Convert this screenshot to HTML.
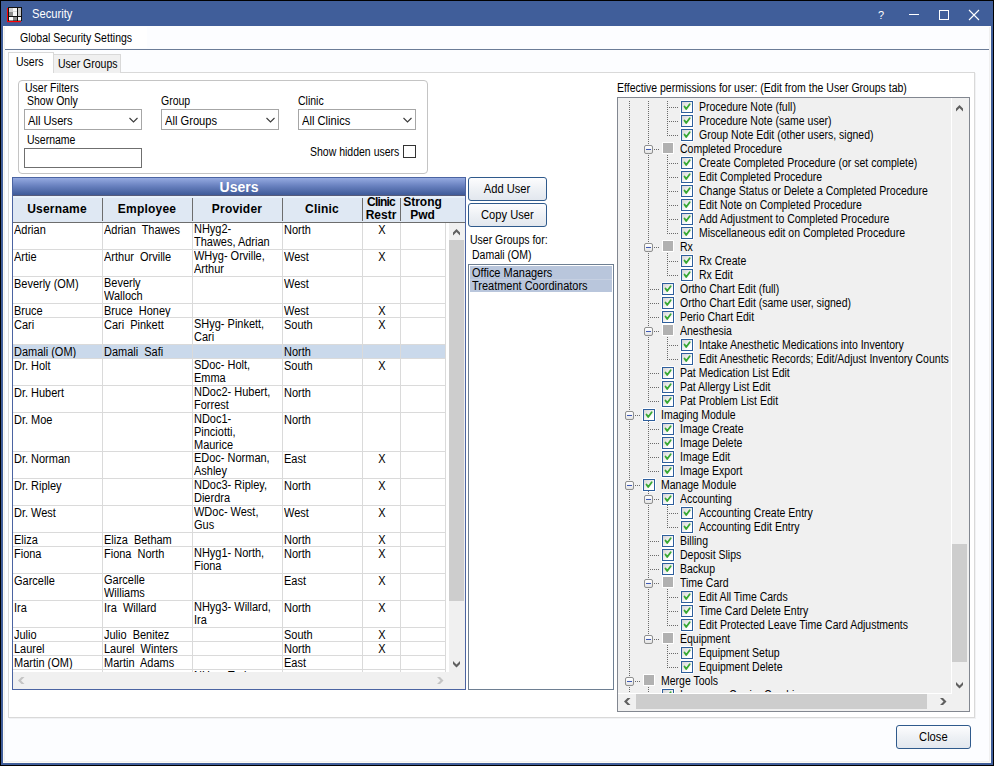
<!DOCTYPE html><html><head><meta charset="utf-8"><title>Security</title><style>
*{margin:0;padding:0;box-sizing:border-box}
html,body{width:994px;height:766px;overflow:hidden;background:#000}
body{position:relative;font-family:"Liberation Sans", sans-serif;font-size:12px;color:#000}
.a{position:absolute}
.t{position:absolute;white-space:nowrap;line-height:13px;transform-origin:0 0}
.ts{transform:scaleX(0.875)}
.tg{transform:scaleX(0.915)}
.tm{transform:scaleX(0.93)}
.cm span{transform:scaleX(0.93)}
.c{position:absolute;white-space:nowrap;line-height:13px;text-align:center}
.c span{display:inline-block}
.cs span{transform:scaleX(0.875)}
.cg span{transform:scaleX(0.915)}
.b{font-weight:bold}
.nos span{transform:none}
</style></head><body>
<div class="a" style="left:1px;top:1px;width:992px;height:764px;background:#405e9a"></div>
<div class="a" style="left:3px;top:26px;width:988px;height:737px;background:#fbfaf4"></div>
<div class="a" style="left:4px;top:27px;width:986px;height:735px;background:#f0f0f0"></div>
<div class="a" style="left:5px;top:27px;width:984px;height:734px;background:#fcfdff"></div>
<div class="a" style="left:3px;top:26px;width:987px;height:1px;background:#fdfdfd"></div>
<svg class="a" style="left:7px;top:7px" width="15" height="16" viewBox="0 0 15 16">
<rect x="0" y="1" width="1" height="14" fill="#f00"/><rect x="0" y="14" width="14" height="1.2" fill="#f00"/>
<rect x="1" y="0" width="14" height="14" fill="#111"/>
<rect x="2" y="1" width="4" height="4" fill="#cfcfcf"/><rect x="2" y="5" width="4" height="4" fill="#8c8c8c"/>
<rect x="6" y="1" width="4" height="8" fill="#f8f8f8"/><rect x="6" y="4" width="4" height="1" fill="#dcdcdc"/>
<rect x="11" y="1" width="3" height="8" fill="#c4c4c4"/>
<rect x="2" y="10" width="4" height="3.5" fill="#fdfdfd"/><rect x="6" y="10" width="4" height="3.5" fill="#8a8a8a"/><rect x="11" y="10" width="3" height="3.5" fill="#fdfdfd"/>
</svg>
<div class="t tm" style="left:32px;top:8px;color:#fff">Security</div>
<div class="t ts" style="left:878px;top:9px;color:#fff;transform:none;font-size:11px">?</div>
<div class="a" style="left:909px;top:14px;width:10px;height:1px;background:#fff"></div>
<div class="a" style="left:939px;top:10px;width:10px;height:10px;border:1px solid #fff"></div>
<svg class="a" style="left:968px;top:9px" width="12" height="12" viewBox="0 0 12 12"><path d="M1 1L11 11M11 1L1 11" stroke="#fff" stroke-width="1.1"/></svg>
<div class="a" style="left:5px;top:27px;width:142px;height:21px;background:#fff"></div>
<div class="t ts" style="left:20px;top:32px;">Global Security Settings</div>
<div class="a" style="left:5px;top:49px;width:984px;height:1px;background:#6b7c97"></div>
<div class="a" style="left:9px;top:73px;width:967px;height:646px;background:#f1f2f4"></div>
<div class="a" style="left:8px;top:72px;width:967px;height:646px;background:#fff;border:1px solid #d9d9d9"></div>
<div class="a" style="left:53px;top:54px;width:68px;height:19px;background:#f0f0f0;border:1px solid #d9d9d9;border-bottom:none"></div>
<div class="t ts" style="left:58px;top:58px;">User Groups</div>
<div class="a" style="left:8px;top:52px;width:46px;height:21px;background:#fff;border:1px solid #d9d9d9;border-bottom:none"></div>
<div class="t ts" style="left:16px;top:56px;">Users</div>
<div class="a" style="left:18px;top:80px;width:410px;height:94px;border:1px solid #c4c4c4;border-radius:4px"></div>
<div class="t ts" style="left:25px;top:82px;">User Filters</div>
<div class="t ts" style="left:27px;top:95px;">Show Only</div>
<div class="t ts" style="left:161px;top:95px;">Group</div>
<div class="t ts" style="left:298px;top:95px;">Clinic</div>
<div class="t ts" style="left:27px;top:134px;">Username</div>
<div class="a" style="left:24px;top:109px;width:118px;height:21px;border:1px solid #a6a6a6;background:#fff"></div>
<div class="t tm" style="left:28px;top:115px;">All Users</div>
<svg class="a" style="left:129px;top:117px" width="9" height="7" viewBox="0 0 9 7"><path d="M0.5 1L4.5 5L8.5 1" fill="none" stroke="#3a3a3a" stroke-width="1.1"/></svg>
<div class="a" style="left:161px;top:109px;width:118px;height:21px;border:1px solid #a6a6a6;background:#fff"></div>
<div class="t tm" style="left:165px;top:115px;">All Groups</div>
<svg class="a" style="left:266px;top:117px" width="9" height="7" viewBox="0 0 9 7"><path d="M0.5 1L4.5 5L8.5 1" fill="none" stroke="#3a3a3a" stroke-width="1.1"/></svg>
<div class="a" style="left:298px;top:109px;width:118px;height:21px;border:1px solid #a6a6a6;background:#fff"></div>
<div class="t tm" style="left:302px;top:115px;">All Clinics</div>
<svg class="a" style="left:403px;top:117px" width="9" height="7" viewBox="0 0 9 7"><path d="M0.5 1L4.5 5L8.5 1" fill="none" stroke="#3a3a3a" stroke-width="1.1"/></svg>
<div class="a" style="left:24px;top:148px;width:118px;height:20px;border:1px solid #6f6f6f;background:#fff"></div>
<div class="t ts" style="left:310px;top:146px;">Show hidden users</div>
<div class="a" style="left:403px;top:145px;width:13px;height:13px;border:1px solid #333;background:#fff"></div>
<div class="a" style="left:12px;top:177px;width:454px;height:513px;border:1px solid #4b64a2;background:#fff;overflow:hidden">
<div class="a" style="left:0px;top:0px;width:452px;height:17px;background:linear-gradient(#95aae0,#6a82c0 45%,#3e5a98)"></div>
<div class="c cs b nos" style="left:0px;top:1px;width:452px;color:#fff;font-size:14px;line-height:16px"><span>Users</span></div>
<div class="a" style="left:0px;top:18px;width:452px;height:27px;background:#dfe8f3;border-bottom:1px solid #6d6d6d"></div>
<div class="a" style="left:0px;top:17px;width:452px;height:1px;background:#565b7a"></div>
<div class="a" style="left:0px;top:18px;width:452px;height:2px;background:#e8f1fa"></div>
<div class="c cg b nos" style="left:-1px;top:25px;width:90px;letter-spacing:0.2px"><span>Username</span></div>
<div class="c cg b nos" style="left:89px;top:25px;width:90px;letter-spacing:0.2px"><span>Employee</span></div>
<div class="c cg b nos" style="left:179px;top:25px;width:90px;letter-spacing:0.2px"><span>Provider</span></div>
<div class="c cg b nos" style="left:269px;top:25px;width:80px;letter-spacing:0.2px"><span>Clinic</span></div>
<div class="c cg b nos" style="left:349px;top:18px;width:38px;line-height:13px"><span><span style="letter-spacing:-0.8px">Clinic</span><br>Restr</span></div>
<div class="c cg b nos" style="left:387px;top:18px;width:45px;line-height:13px"><span>Strong<br>Pwd</span></div>
<div class="a" style="left:89px;top:20px;width:1px;height:23px;background:#6d6d6d"></div>
<div class="a" style="left:179px;top:20px;width:1px;height:23px;background:#6d6d6d"></div>
<div class="a" style="left:269px;top:20px;width:1px;height:23px;background:#6d6d6d"></div>
<div class="a" style="left:349px;top:20px;width:1px;height:23px;background:#6d6d6d"></div>
<div class="a" style="left:387px;top:20px;width:1px;height:23px;background:#6d6d6d"></div>
<div class="a" style="left:0;top:45px;width:435px;height:449px;overflow:hidden">
<div class="t tg" style="left:1px;top:1px;">Adrian</div>
<div class="t tg" style="left:91px;top:1px;">Adrian&nbsp; Thawes</div>
<div class="t tg" style="left:181px;top:0px;">NHyg2-<br>Thawes, Adrian</div>
<div class="t tg" style="left:271px;top:1px;">North</div>
<div class="c cg " style="left:350px;top:1px;width:38px;"><span>X</span></div>
<div class="a" style="left:0px;top:26px;width:432px;height:1px;background:#dadada"></div>
<div class="t tg" style="left:1px;top:28px;">Artie</div>
<div class="t tg" style="left:91px;top:28px;">Arthur&nbsp; Orville</div>
<div class="t tg" style="left:181px;top:27px;">WHyg- Orville,<br>Arthur</div>
<div class="t tg" style="left:271px;top:28px;">West</div>
<div class="c cg " style="left:350px;top:28px;width:38px;"><span>X</span></div>
<div class="a" style="left:0px;top:53px;width:432px;height:1px;background:#dadada"></div>
<div class="t tg" style="left:1px;top:55px;">Beverly (OM)</div>
<div class="t tg" style="left:91px;top:54px;">Beverly<br>Walloch</div>
<div class="t tg" style="left:271px;top:55px;">West</div>
<div class="a" style="left:0px;top:80px;width:432px;height:1px;background:#dadada"></div>
<div class="t tg" style="left:1px;top:82px;">Bruce</div>
<div class="t tg" style="left:91px;top:82px;">Bruce&nbsp; Honey</div>
<div class="t tg" style="left:271px;top:82px;">West</div>
<div class="c cg " style="left:350px;top:82px;width:38px;"><span>X</span></div>
<div class="a" style="left:0px;top:94px;width:432px;height:1px;background:#dadada"></div>
<div class="t tg" style="left:1px;top:96px;">Cari</div>
<div class="t tg" style="left:91px;top:96px;">Cari&nbsp; Pinkett</div>
<div class="t tg" style="left:181px;top:95px;">SHyg- Pinkett,<br>Cari</div>
<div class="t tg" style="left:271px;top:96px;">South</div>
<div class="c cg " style="left:350px;top:96px;width:38px;"><span>X</span></div>
<div class="a" style="left:0px;top:121px;width:432px;height:1px;background:#dadada"></div>
<div class="a" style="left:0px;top:122px;width:432px;height:13px;background:#cad9eb"></div>
<div class="t tg" style="left:1px;top:123px;">Damali (OM)</div>
<div class="t tg" style="left:91px;top:123px;">Damali&nbsp; Safi</div>
<div class="t tg" style="left:271px;top:123px;">North</div>
<div class="a" style="left:0px;top:135px;width:432px;height:1px;background:#dadada"></div>
<div class="t tg" style="left:1px;top:137px;">Dr. Holt</div>
<div class="t tg" style="left:181px;top:136px;">SDoc- Holt,<br>Emma</div>
<div class="t tg" style="left:271px;top:137px;">South</div>
<div class="c cg " style="left:350px;top:137px;width:38px;"><span>X</span></div>
<div class="a" style="left:0px;top:162px;width:432px;height:1px;background:#dadada"></div>
<div class="t tg" style="left:1px;top:164px;">Dr. Hubert</div>
<div class="t tg" style="left:181px;top:163px;">NDoc2- Hubert,<br>Forrest</div>
<div class="t tg" style="left:271px;top:164px;">North</div>
<div class="a" style="left:0px;top:189px;width:432px;height:1px;background:#dadada"></div>
<div class="t tg" style="left:1px;top:191px;">Dr. Moe</div>
<div class="t tg" style="left:181px;top:190px;">NDoc1-<br>Pinciotti,<br>Maurice</div>
<div class="t tg" style="left:271px;top:191px;">North</div>
<div class="a" style="left:0px;top:228px;width:432px;height:1px;background:#dadada"></div>
<div class="t tg" style="left:1px;top:230px;">Dr. Norman</div>
<div class="t tg" style="left:181px;top:229px;">EDoc- Norman,<br>Ashley</div>
<div class="t tg" style="left:271px;top:230px;">East</div>
<div class="c cg " style="left:350px;top:230px;width:38px;"><span>X</span></div>
<div class="a" style="left:0px;top:255px;width:432px;height:1px;background:#dadada"></div>
<div class="t tg" style="left:1px;top:257px;">Dr. Ripley</div>
<div class="t tg" style="left:181px;top:256px;">NDoc3- Ripley,<br>Dierdra</div>
<div class="t tg" style="left:271px;top:257px;">North</div>
<div class="c cg " style="left:350px;top:257px;width:38px;"><span>X</span></div>
<div class="a" style="left:0px;top:282px;width:432px;height:1px;background:#dadada"></div>
<div class="t tg" style="left:1px;top:284px;">Dr. West</div>
<div class="t tg" style="left:181px;top:283px;">WDoc- West,<br>Gus</div>
<div class="t tg" style="left:271px;top:284px;">West</div>
<div class="c cg " style="left:350px;top:284px;width:38px;"><span>X</span></div>
<div class="a" style="left:0px;top:309px;width:432px;height:1px;background:#dadada"></div>
<div class="t tg" style="left:1px;top:311px;">Eliza</div>
<div class="t tg" style="left:91px;top:311px;">Eliza&nbsp; Betham</div>
<div class="t tg" style="left:271px;top:311px;">North</div>
<div class="c cg " style="left:350px;top:311px;width:38px;"><span>X</span></div>
<div class="a" style="left:0px;top:323px;width:432px;height:1px;background:#dadada"></div>
<div class="t tg" style="left:1px;top:325px;">Fiona</div>
<div class="t tg" style="left:91px;top:325px;">Fiona&nbsp; North</div>
<div class="t tg" style="left:181px;top:324px;">NHyg1- North,<br>Fiona</div>
<div class="t tg" style="left:271px;top:325px;">North</div>
<div class="c cg " style="left:350px;top:325px;width:38px;"><span>X</span></div>
<div class="a" style="left:0px;top:350px;width:432px;height:1px;background:#dadada"></div>
<div class="t tg" style="left:1px;top:352px;">Garcelle</div>
<div class="t tg" style="left:91px;top:351px;">Garcelle<br>Williams</div>
<div class="t tg" style="left:271px;top:352px;">East</div>
<div class="c cg " style="left:350px;top:352px;width:38px;"><span>X</span></div>
<div class="a" style="left:0px;top:377px;width:432px;height:1px;background:#dadada"></div>
<div class="t tg" style="left:1px;top:379px;">Ira</div>
<div class="t tg" style="left:91px;top:379px;">Ira&nbsp; Willard</div>
<div class="t tg" style="left:181px;top:378px;">NHyg3- Willard,<br>Ira</div>
<div class="t tg" style="left:271px;top:379px;">North</div>
<div class="c cg " style="left:350px;top:379px;width:38px;"><span>X</span></div>
<div class="a" style="left:0px;top:404px;width:432px;height:1px;background:#dadada"></div>
<div class="t tg" style="left:1px;top:406px;">Julio</div>
<div class="t tg" style="left:91px;top:406px;">Julio&nbsp; Benitez</div>
<div class="t tg" style="left:271px;top:406px;">South</div>
<div class="c cg " style="left:350px;top:406px;width:38px;"><span>X</span></div>
<div class="a" style="left:0px;top:418px;width:432px;height:1px;background:#dadada"></div>
<div class="t tg" style="left:1px;top:420px;">Laurel</div>
<div class="t tg" style="left:91px;top:420px;">Laurel&nbsp; Winters</div>
<div class="t tg" style="left:271px;top:420px;">North</div>
<div class="c cg " style="left:350px;top:420px;width:38px;"><span>X</span></div>
<div class="a" style="left:0px;top:432px;width:432px;height:1px;background:#dadada"></div>
<div class="t tg" style="left:1px;top:434px;">Martin (OM)</div>
<div class="t tg" style="left:91px;top:434px;">Martin&nbsp; Adams</div>
<div class="t tg" style="left:271px;top:434px;">East</div>
<div class="a" style="left:0px;top:446px;width:432px;height:1px;background:#dadada"></div>
<div class="t tg" style="left:181px;top:447px;">NHyg- Trainor,<br>Mel</div>
<div class="a" style="left:0px;top:473px;width:432px;height:1px;background:#dadada"></div>
<div class="a" style="left:89px;top:0px;width:1px;height:449px;background:#dadada"></div>
<div class="a" style="left:179px;top:0px;width:1px;height:449px;background:#dadada"></div>
<div class="a" style="left:269px;top:0px;width:1px;height:449px;background:#dadada"></div>
<div class="a" style="left:349px;top:0px;width:1px;height:449px;background:#dadada"></div>
<div class="a" style="left:387px;top:0px;width:1px;height:449px;background:#dadada"></div>
<div class="a" style="left:432px;top:0px;width:1px;height:449px;background:#dadada"></div>
</div>
<div class="a" style="left:436px;top:45px;width:16px;height:466px;background:#f0f0f0"></div>
<div class="a" style="left:436px;top:62px;width:15px;height:361px;background:#cdcdcd"></div>
<div class="a" style="left:0px;top:494px;width:436px;height:17px;background:#f0f0f0"></div>
</div>
<div class="a" style="left:468px;top:177px;width:79px;height:24px;border:1px solid #2f5a8c;border-radius:3px;background:linear-gradient(#fdfdfe,#eef1f5 50%,#e2e7ee)"></div>
<div class="c cm " style="left:468px;top:183px;width:79px;"><span>Add User</span></div>
<div class="a" style="left:468px;top:203px;width:79px;height:24px;border:1px solid #2f5a8c;border-radius:3px;background:linear-gradient(#fdfdfe,#eef1f5 50%,#e2e7ee)"></div>
<div class="c cm " style="left:468px;top:209px;width:79px;"><span>Copy User</span></div>
<div class="t ts" style="left:470px;top:234px;">User Groups for:</div>
<div class="t ts" style="left:472px;top:249px;">Damali (OM)</div>
<div class="a" style="left:468px;top:264px;width:146px;height:426px;border:1px solid #6e7f92;background:#fff"></div>
<div class="a" style="left:470px;top:266px;width:142px;height:13px;background:#b9c6dc"></div>
<div class="a" style="left:470px;top:279px;width:142px;height:13px;background:#b9c6dc"></div>
<div class="a" style="left:470px;top:279px;width:142px;height:1px;background:#c6d0e2"></div>
<div class="t tg" style="left:472px;top:267px;">Office Managers</div>
<div class="t tg" style="left:472px;top:280px;">Treatment Coordinators</div>
<div class="a" style="left:896px;top:725px;width:75px;height:24px;border:1px solid #2f5a8c;border-radius:3px;background:linear-gradient(#fdfdfe,#eef1f5 50%,#e2e7ee)"></div>
<div class="c cm " style="left:896px;top:731px;width:75px;"><span>Close</span></div>
<div class="t ts" style="left:617px;top:82px;">Effective permissions for user: (Edit from the User Groups tab)</div>
<div class="a" style="left:617px;top:97px;width:353px;height:615px;border:1px solid #828790;background:#f0f0f0;overflow:hidden">
<div class="a" style="left:62px;top:2px;width:14px;height:14px;background:#fff;border-radius:2px"></div><div class="a" style="left:63px;top:3px;width:12px;height:12px;border:1px solid #2d5e9c;background:linear-gradient(135deg,#d6d6d6,#fff 75%)"></div><svg class="a" style="left:63px;top:3px" width="12" height="12" viewBox="0 0 12 12"><path d="M3.5 5.4L5.2 8L8.7 3.3" fill="none" stroke="#38a834" stroke-width="1.8" stroke-linecap="round" stroke-linejoin="round"/></svg><div class="t ts" style="left:81px;top:3px">Procedure Note (full)</div><div class="a" style="left:62px;top:16px;width:14px;height:14px;background:#fff;border-radius:2px"></div><div class="a" style="left:63px;top:17px;width:12px;height:12px;border:1px solid #2d5e9c;background:linear-gradient(135deg,#d6d6d6,#fff 75%)"></div><svg class="a" style="left:63px;top:17px" width="12" height="12" viewBox="0 0 12 12"><path d="M3.5 5.4L5.2 8L8.7 3.3" fill="none" stroke="#38a834" stroke-width="1.8" stroke-linecap="round" stroke-linejoin="round"/></svg><div class="t ts" style="left:81px;top:17px">Procedure Note (same user)</div><div class="a" style="left:62px;top:30px;width:14px;height:14px;background:#fff;border-radius:2px"></div><div class="a" style="left:63px;top:31px;width:12px;height:12px;border:1px solid #2d5e9c;background:linear-gradient(135deg,#d6d6d6,#fff 75%)"></div><svg class="a" style="left:63px;top:31px" width="12" height="12" viewBox="0 0 12 12"><path d="M3.5 5.4L5.2 8L8.7 3.3" fill="none" stroke="#38a834" stroke-width="1.8" stroke-linecap="round" stroke-linejoin="round"/></svg><div class="t ts" style="left:81px;top:31px">Group Note Edit (other users, signed)</div><div class="a" style="left:26px;top:47px;width:9px;height:9px;border:1px solid #8e8f8f;border-radius:2px;background:linear-gradient(#fff,#e3e3e3)"></div><div class="a" style="left:28px;top:51px;width:5px;height:1px;background:#3f5ab5"></div><div class="a" style="left:44px;top:44px;width:12px;height:12px;background:#fff;border-radius:1px"></div><div class="a" style="left:45px;top:45px;width:10px;height:10px;background:#b1b1b1"></div><div class="t ts" style="left:62px;top:45px">Completed Procedure</div><div class="a" style="left:62px;top:58px;width:14px;height:14px;background:#fff;border-radius:2px"></div><div class="a" style="left:63px;top:59px;width:12px;height:12px;border:1px solid #2d5e9c;background:linear-gradient(135deg,#d6d6d6,#fff 75%)"></div><svg class="a" style="left:63px;top:59px" width="12" height="12" viewBox="0 0 12 12"><path d="M3.5 5.4L5.2 8L8.7 3.3" fill="none" stroke="#38a834" stroke-width="1.8" stroke-linecap="round" stroke-linejoin="round"/></svg><div class="t ts" style="left:81px;top:59px">Create Completed Procedure (or set complete)</div><div class="a" style="left:62px;top:72px;width:14px;height:14px;background:#fff;border-radius:2px"></div><div class="a" style="left:63px;top:73px;width:12px;height:12px;border:1px solid #2d5e9c;background:linear-gradient(135deg,#d6d6d6,#fff 75%)"></div><svg class="a" style="left:63px;top:73px" width="12" height="12" viewBox="0 0 12 12"><path d="M3.5 5.4L5.2 8L8.7 3.3" fill="none" stroke="#38a834" stroke-width="1.8" stroke-linecap="round" stroke-linejoin="round"/></svg><div class="t ts" style="left:81px;top:73px">Edit Completed Procedure</div><div class="a" style="left:62px;top:86px;width:14px;height:14px;background:#fff;border-radius:2px"></div><div class="a" style="left:63px;top:87px;width:12px;height:12px;border:1px solid #2d5e9c;background:linear-gradient(135deg,#d6d6d6,#fff 75%)"></div><svg class="a" style="left:63px;top:87px" width="12" height="12" viewBox="0 0 12 12"><path d="M3.5 5.4L5.2 8L8.7 3.3" fill="none" stroke="#38a834" stroke-width="1.8" stroke-linecap="round" stroke-linejoin="round"/></svg><div class="t ts" style="left:81px;top:87px">Change Status or Delete a Completed Procedure</div><div class="a" style="left:62px;top:100px;width:14px;height:14px;background:#fff;border-radius:2px"></div><div class="a" style="left:63px;top:101px;width:12px;height:12px;border:1px solid #2d5e9c;background:linear-gradient(135deg,#d6d6d6,#fff 75%)"></div><svg class="a" style="left:63px;top:101px" width="12" height="12" viewBox="0 0 12 12"><path d="M3.5 5.4L5.2 8L8.7 3.3" fill="none" stroke="#38a834" stroke-width="1.8" stroke-linecap="round" stroke-linejoin="round"/></svg><div class="t ts" style="left:81px;top:101px">Edit Note on Completed Procedure</div><div class="a" style="left:62px;top:114px;width:14px;height:14px;background:#fff;border-radius:2px"></div><div class="a" style="left:63px;top:115px;width:12px;height:12px;border:1px solid #2d5e9c;background:linear-gradient(135deg,#d6d6d6,#fff 75%)"></div><svg class="a" style="left:63px;top:115px" width="12" height="12" viewBox="0 0 12 12"><path d="M3.5 5.4L5.2 8L8.7 3.3" fill="none" stroke="#38a834" stroke-width="1.8" stroke-linecap="round" stroke-linejoin="round"/></svg><div class="t ts" style="left:81px;top:115px">Add Adjustment to Completed Procedure</div><div class="a" style="left:62px;top:128px;width:14px;height:14px;background:#fff;border-radius:2px"></div><div class="a" style="left:63px;top:129px;width:12px;height:12px;border:1px solid #2d5e9c;background:linear-gradient(135deg,#d6d6d6,#fff 75%)"></div><svg class="a" style="left:63px;top:129px" width="12" height="12" viewBox="0 0 12 12"><path d="M3.5 5.4L5.2 8L8.7 3.3" fill="none" stroke="#38a834" stroke-width="1.8" stroke-linecap="round" stroke-linejoin="round"/></svg><div class="t ts" style="left:81px;top:129px">Miscellaneous edit on Completed Procedure</div><div class="a" style="left:26px;top:145px;width:9px;height:9px;border:1px solid #8e8f8f;border-radius:2px;background:linear-gradient(#fff,#e3e3e3)"></div><div class="a" style="left:28px;top:149px;width:5px;height:1px;background:#3f5ab5"></div><div class="a" style="left:44px;top:142px;width:12px;height:12px;background:#fff;border-radius:1px"></div><div class="a" style="left:45px;top:143px;width:10px;height:10px;background:#b1b1b1"></div><div class="t ts" style="left:62px;top:143px">Rx</div><div class="a" style="left:62px;top:156px;width:14px;height:14px;background:#fff;border-radius:2px"></div><div class="a" style="left:63px;top:157px;width:12px;height:12px;border:1px solid #2d5e9c;background:linear-gradient(135deg,#d6d6d6,#fff 75%)"></div><svg class="a" style="left:63px;top:157px" width="12" height="12" viewBox="0 0 12 12"><path d="M3.5 5.4L5.2 8L8.7 3.3" fill="none" stroke="#38a834" stroke-width="1.8" stroke-linecap="round" stroke-linejoin="round"/></svg><div class="t ts" style="left:81px;top:157px">Rx Create</div><div class="a" style="left:62px;top:170px;width:14px;height:14px;background:#fff;border-radius:2px"></div><div class="a" style="left:63px;top:171px;width:12px;height:12px;border:1px solid #2d5e9c;background:linear-gradient(135deg,#d6d6d6,#fff 75%)"></div><svg class="a" style="left:63px;top:171px" width="12" height="12" viewBox="0 0 12 12"><path d="M3.5 5.4L5.2 8L8.7 3.3" fill="none" stroke="#38a834" stroke-width="1.8" stroke-linecap="round" stroke-linejoin="round"/></svg><div class="t ts" style="left:81px;top:171px">Rx Edit</div><div class="a" style="left:43px;top:184px;width:14px;height:14px;background:#fff;border-radius:2px"></div><div class="a" style="left:44px;top:185px;width:12px;height:12px;border:1px solid #2d5e9c;background:linear-gradient(135deg,#d6d6d6,#fff 75%)"></div><svg class="a" style="left:44px;top:185px" width="12" height="12" viewBox="0 0 12 12"><path d="M3.5 5.4L5.2 8L8.7 3.3" fill="none" stroke="#38a834" stroke-width="1.8" stroke-linecap="round" stroke-linejoin="round"/></svg><div class="t ts" style="left:62px;top:185px">Ortho Chart Edit (full)</div><div class="a" style="left:43px;top:198px;width:14px;height:14px;background:#fff;border-radius:2px"></div><div class="a" style="left:44px;top:199px;width:12px;height:12px;border:1px solid #2d5e9c;background:linear-gradient(135deg,#d6d6d6,#fff 75%)"></div><svg class="a" style="left:44px;top:199px" width="12" height="12" viewBox="0 0 12 12"><path d="M3.5 5.4L5.2 8L8.7 3.3" fill="none" stroke="#38a834" stroke-width="1.8" stroke-linecap="round" stroke-linejoin="round"/></svg><div class="t ts" style="left:62px;top:199px">Ortho Chart Edit (same user, signed)</div><div class="a" style="left:43px;top:212px;width:14px;height:14px;background:#fff;border-radius:2px"></div><div class="a" style="left:44px;top:213px;width:12px;height:12px;border:1px solid #2d5e9c;background:linear-gradient(135deg,#d6d6d6,#fff 75%)"></div><svg class="a" style="left:44px;top:213px" width="12" height="12" viewBox="0 0 12 12"><path d="M3.5 5.4L5.2 8L8.7 3.3" fill="none" stroke="#38a834" stroke-width="1.8" stroke-linecap="round" stroke-linejoin="round"/></svg><div class="t ts" style="left:62px;top:213px">Perio Chart Edit</div><div class="a" style="left:26px;top:229px;width:9px;height:9px;border:1px solid #8e8f8f;border-radius:2px;background:linear-gradient(#fff,#e3e3e3)"></div><div class="a" style="left:28px;top:233px;width:5px;height:1px;background:#3f5ab5"></div><div class="a" style="left:44px;top:226px;width:12px;height:12px;background:#fff;border-radius:1px"></div><div class="a" style="left:45px;top:227px;width:10px;height:10px;background:#b1b1b1"></div><div class="t ts" style="left:62px;top:227px">Anesthesia</div><div class="a" style="left:62px;top:240px;width:14px;height:14px;background:#fff;border-radius:2px"></div><div class="a" style="left:63px;top:241px;width:12px;height:12px;border:1px solid #2d5e9c;background:linear-gradient(135deg,#d6d6d6,#fff 75%)"></div><svg class="a" style="left:63px;top:241px" width="12" height="12" viewBox="0 0 12 12"><path d="M3.5 5.4L5.2 8L8.7 3.3" fill="none" stroke="#38a834" stroke-width="1.8" stroke-linecap="round" stroke-linejoin="round"/></svg><div class="t ts" style="left:81px;top:241px">Intake Anesthetic Medications into Inventory</div><div class="a" style="left:62px;top:254px;width:14px;height:14px;background:#fff;border-radius:2px"></div><div class="a" style="left:63px;top:255px;width:12px;height:12px;border:1px solid #2d5e9c;background:linear-gradient(135deg,#d6d6d6,#fff 75%)"></div><svg class="a" style="left:63px;top:255px" width="12" height="12" viewBox="0 0 12 12"><path d="M3.5 5.4L5.2 8L8.7 3.3" fill="none" stroke="#38a834" stroke-width="1.8" stroke-linecap="round" stroke-linejoin="round"/></svg><div class="t ts" style="left:81px;top:255px">Edit Anesthetic Records; Edit/Adjust Inventory Counts</div><div class="a" style="left:43px;top:268px;width:14px;height:14px;background:#fff;border-radius:2px"></div><div class="a" style="left:44px;top:269px;width:12px;height:12px;border:1px solid #2d5e9c;background:linear-gradient(135deg,#d6d6d6,#fff 75%)"></div><svg class="a" style="left:44px;top:269px" width="12" height="12" viewBox="0 0 12 12"><path d="M3.5 5.4L5.2 8L8.7 3.3" fill="none" stroke="#38a834" stroke-width="1.8" stroke-linecap="round" stroke-linejoin="round"/></svg><div class="t ts" style="left:62px;top:269px">Pat Medication List Edit</div><div class="a" style="left:43px;top:282px;width:14px;height:14px;background:#fff;border-radius:2px"></div><div class="a" style="left:44px;top:283px;width:12px;height:12px;border:1px solid #2d5e9c;background:linear-gradient(135deg,#d6d6d6,#fff 75%)"></div><svg class="a" style="left:44px;top:283px" width="12" height="12" viewBox="0 0 12 12"><path d="M3.5 5.4L5.2 8L8.7 3.3" fill="none" stroke="#38a834" stroke-width="1.8" stroke-linecap="round" stroke-linejoin="round"/></svg><div class="t ts" style="left:62px;top:283px">Pat Allergy List Edit</div><div class="a" style="left:43px;top:296px;width:14px;height:14px;background:#fff;border-radius:2px"></div><div class="a" style="left:44px;top:297px;width:12px;height:12px;border:1px solid #2d5e9c;background:linear-gradient(135deg,#d6d6d6,#fff 75%)"></div><svg class="a" style="left:44px;top:297px" width="12" height="12" viewBox="0 0 12 12"><path d="M3.5 5.4L5.2 8L8.7 3.3" fill="none" stroke="#38a834" stroke-width="1.8" stroke-linecap="round" stroke-linejoin="round"/></svg><div class="t ts" style="left:62px;top:297px">Pat Problem List Edit</div><div class="a" style="left:7px;top:313px;width:9px;height:9px;border:1px solid #8e8f8f;border-radius:2px;background:linear-gradient(#fff,#e3e3e3)"></div><div class="a" style="left:9px;top:317px;width:5px;height:1px;background:#3f5ab5"></div><div class="a" style="left:24px;top:310px;width:14px;height:14px;background:#fff;border-radius:2px"></div><div class="a" style="left:25px;top:311px;width:12px;height:12px;border:1px solid #2d5e9c;background:linear-gradient(135deg,#d6d6d6,#fff 75%)"></div><svg class="a" style="left:25px;top:311px" width="12" height="12" viewBox="0 0 12 12"><path d="M3.5 5.4L5.2 8L8.7 3.3" fill="none" stroke="#38a834" stroke-width="1.8" stroke-linecap="round" stroke-linejoin="round"/></svg><div class="t ts" style="left:43px;top:311px">Imaging Module</div><div class="a" style="left:43px;top:324px;width:14px;height:14px;background:#fff;border-radius:2px"></div><div class="a" style="left:44px;top:325px;width:12px;height:12px;border:1px solid #2d5e9c;background:linear-gradient(135deg,#d6d6d6,#fff 75%)"></div><svg class="a" style="left:44px;top:325px" width="12" height="12" viewBox="0 0 12 12"><path d="M3.5 5.4L5.2 8L8.7 3.3" fill="none" stroke="#38a834" stroke-width="1.8" stroke-linecap="round" stroke-linejoin="round"/></svg><div class="t ts" style="left:62px;top:325px">Image Create</div><div class="a" style="left:43px;top:338px;width:14px;height:14px;background:#fff;border-radius:2px"></div><div class="a" style="left:44px;top:339px;width:12px;height:12px;border:1px solid #2d5e9c;background:linear-gradient(135deg,#d6d6d6,#fff 75%)"></div><svg class="a" style="left:44px;top:339px" width="12" height="12" viewBox="0 0 12 12"><path d="M3.5 5.4L5.2 8L8.7 3.3" fill="none" stroke="#38a834" stroke-width="1.8" stroke-linecap="round" stroke-linejoin="round"/></svg><div class="t ts" style="left:62px;top:339px">Image Delete</div><div class="a" style="left:43px;top:352px;width:14px;height:14px;background:#fff;border-radius:2px"></div><div class="a" style="left:44px;top:353px;width:12px;height:12px;border:1px solid #2d5e9c;background:linear-gradient(135deg,#d6d6d6,#fff 75%)"></div><svg class="a" style="left:44px;top:353px" width="12" height="12" viewBox="0 0 12 12"><path d="M3.5 5.4L5.2 8L8.7 3.3" fill="none" stroke="#38a834" stroke-width="1.8" stroke-linecap="round" stroke-linejoin="round"/></svg><div class="t ts" style="left:62px;top:353px">Image Edit</div><div class="a" style="left:43px;top:366px;width:14px;height:14px;background:#fff;border-radius:2px"></div><div class="a" style="left:44px;top:367px;width:12px;height:12px;border:1px solid #2d5e9c;background:linear-gradient(135deg,#d6d6d6,#fff 75%)"></div><svg class="a" style="left:44px;top:367px" width="12" height="12" viewBox="0 0 12 12"><path d="M3.5 5.4L5.2 8L8.7 3.3" fill="none" stroke="#38a834" stroke-width="1.8" stroke-linecap="round" stroke-linejoin="round"/></svg><div class="t ts" style="left:62px;top:367px">Image Export</div><div class="a" style="left:7px;top:383px;width:9px;height:9px;border:1px solid #8e8f8f;border-radius:2px;background:linear-gradient(#fff,#e3e3e3)"></div><div class="a" style="left:9px;top:387px;width:5px;height:1px;background:#3f5ab5"></div><div class="a" style="left:24px;top:380px;width:14px;height:14px;background:#fff;border-radius:2px"></div><div class="a" style="left:25px;top:381px;width:12px;height:12px;border:1px solid #2d5e9c;background:linear-gradient(135deg,#d6d6d6,#fff 75%)"></div><svg class="a" style="left:25px;top:381px" width="12" height="12" viewBox="0 0 12 12"><path d="M3.5 5.4L5.2 8L8.7 3.3" fill="none" stroke="#38a834" stroke-width="1.8" stroke-linecap="round" stroke-linejoin="round"/></svg><div class="t ts" style="left:43px;top:381px">Manage Module</div><div class="a" style="left:26px;top:397px;width:9px;height:9px;border:1px solid #8e8f8f;border-radius:2px;background:linear-gradient(#fff,#e3e3e3)"></div><div class="a" style="left:28px;top:401px;width:5px;height:1px;background:#3f5ab5"></div><div class="a" style="left:43px;top:394px;width:14px;height:14px;background:#fff;border-radius:2px"></div><div class="a" style="left:44px;top:395px;width:12px;height:12px;border:1px solid #2d5e9c;background:linear-gradient(135deg,#d6d6d6,#fff 75%)"></div><svg class="a" style="left:44px;top:395px" width="12" height="12" viewBox="0 0 12 12"><path d="M3.5 5.4L5.2 8L8.7 3.3" fill="none" stroke="#38a834" stroke-width="1.8" stroke-linecap="round" stroke-linejoin="round"/></svg><div class="t ts" style="left:62px;top:395px">Accounting</div><div class="a" style="left:62px;top:408px;width:14px;height:14px;background:#fff;border-radius:2px"></div><div class="a" style="left:63px;top:409px;width:12px;height:12px;border:1px solid #2d5e9c;background:linear-gradient(135deg,#d6d6d6,#fff 75%)"></div><svg class="a" style="left:63px;top:409px" width="12" height="12" viewBox="0 0 12 12"><path d="M3.5 5.4L5.2 8L8.7 3.3" fill="none" stroke="#38a834" stroke-width="1.8" stroke-linecap="round" stroke-linejoin="round"/></svg><div class="t ts" style="left:81px;top:409px">Accounting Create Entry</div><div class="a" style="left:62px;top:422px;width:14px;height:14px;background:#fff;border-radius:2px"></div><div class="a" style="left:63px;top:423px;width:12px;height:12px;border:1px solid #2d5e9c;background:linear-gradient(135deg,#d6d6d6,#fff 75%)"></div><svg class="a" style="left:63px;top:423px" width="12" height="12" viewBox="0 0 12 12"><path d="M3.5 5.4L5.2 8L8.7 3.3" fill="none" stroke="#38a834" stroke-width="1.8" stroke-linecap="round" stroke-linejoin="round"/></svg><div class="t ts" style="left:81px;top:423px">Accounting Edit Entry</div><div class="a" style="left:43px;top:436px;width:14px;height:14px;background:#fff;border-radius:2px"></div><div class="a" style="left:44px;top:437px;width:12px;height:12px;border:1px solid #2d5e9c;background:linear-gradient(135deg,#d6d6d6,#fff 75%)"></div><svg class="a" style="left:44px;top:437px" width="12" height="12" viewBox="0 0 12 12"><path d="M3.5 5.4L5.2 8L8.7 3.3" fill="none" stroke="#38a834" stroke-width="1.8" stroke-linecap="round" stroke-linejoin="round"/></svg><div class="t ts" style="left:62px;top:437px">Billing</div><div class="a" style="left:43px;top:450px;width:14px;height:14px;background:#fff;border-radius:2px"></div><div class="a" style="left:44px;top:451px;width:12px;height:12px;border:1px solid #2d5e9c;background:linear-gradient(135deg,#d6d6d6,#fff 75%)"></div><svg class="a" style="left:44px;top:451px" width="12" height="12" viewBox="0 0 12 12"><path d="M3.5 5.4L5.2 8L8.7 3.3" fill="none" stroke="#38a834" stroke-width="1.8" stroke-linecap="round" stroke-linejoin="round"/></svg><div class="t ts" style="left:62px;top:451px">Deposit Slips</div><div class="a" style="left:43px;top:464px;width:14px;height:14px;background:#fff;border-radius:2px"></div><div class="a" style="left:44px;top:465px;width:12px;height:12px;border:1px solid #2d5e9c;background:linear-gradient(135deg,#d6d6d6,#fff 75%)"></div><svg class="a" style="left:44px;top:465px" width="12" height="12" viewBox="0 0 12 12"><path d="M3.5 5.4L5.2 8L8.7 3.3" fill="none" stroke="#38a834" stroke-width="1.8" stroke-linecap="round" stroke-linejoin="round"/></svg><div class="t ts" style="left:62px;top:465px">Backup</div><div class="a" style="left:26px;top:481px;width:9px;height:9px;border:1px solid #8e8f8f;border-radius:2px;background:linear-gradient(#fff,#e3e3e3)"></div><div class="a" style="left:28px;top:485px;width:5px;height:1px;background:#3f5ab5"></div><div class="a" style="left:44px;top:478px;width:12px;height:12px;background:#fff;border-radius:1px"></div><div class="a" style="left:45px;top:479px;width:10px;height:10px;background:#b1b1b1"></div><div class="t ts" style="left:62px;top:479px">Time Card</div><div class="a" style="left:62px;top:492px;width:14px;height:14px;background:#fff;border-radius:2px"></div><div class="a" style="left:63px;top:493px;width:12px;height:12px;border:1px solid #2d5e9c;background:linear-gradient(135deg,#d6d6d6,#fff 75%)"></div><svg class="a" style="left:63px;top:493px" width="12" height="12" viewBox="0 0 12 12"><path d="M3.5 5.4L5.2 8L8.7 3.3" fill="none" stroke="#38a834" stroke-width="1.8" stroke-linecap="round" stroke-linejoin="round"/></svg><div class="t ts" style="left:81px;top:493px">Edit All Time Cards</div><div class="a" style="left:62px;top:506px;width:14px;height:14px;background:#fff;border-radius:2px"></div><div class="a" style="left:63px;top:507px;width:12px;height:12px;border:1px solid #2d5e9c;background:linear-gradient(135deg,#d6d6d6,#fff 75%)"></div><svg class="a" style="left:63px;top:507px" width="12" height="12" viewBox="0 0 12 12"><path d="M3.5 5.4L5.2 8L8.7 3.3" fill="none" stroke="#38a834" stroke-width="1.8" stroke-linecap="round" stroke-linejoin="round"/></svg><div class="t ts" style="left:81px;top:507px">Time Card Delete Entry</div><div class="a" style="left:62px;top:520px;width:14px;height:14px;background:#fff;border-radius:2px"></div><div class="a" style="left:63px;top:521px;width:12px;height:12px;border:1px solid #2d5e9c;background:linear-gradient(135deg,#d6d6d6,#fff 75%)"></div><svg class="a" style="left:63px;top:521px" width="12" height="12" viewBox="0 0 12 12"><path d="M3.5 5.4L5.2 8L8.7 3.3" fill="none" stroke="#38a834" stroke-width="1.8" stroke-linecap="round" stroke-linejoin="round"/></svg><div class="t ts" style="left:81px;top:521px">Edit Protected Leave Time Card Adjustments</div><div class="a" style="left:26px;top:537px;width:9px;height:9px;border:1px solid #8e8f8f;border-radius:2px;background:linear-gradient(#fff,#e3e3e3)"></div><div class="a" style="left:28px;top:541px;width:5px;height:1px;background:#3f5ab5"></div><div class="a" style="left:44px;top:534px;width:12px;height:12px;background:#fff;border-radius:1px"></div><div class="a" style="left:45px;top:535px;width:10px;height:10px;background:#b1b1b1"></div><div class="t ts" style="left:62px;top:535px">Equipment</div><div class="a" style="left:62px;top:548px;width:14px;height:14px;background:#fff;border-radius:2px"></div><div class="a" style="left:63px;top:549px;width:12px;height:12px;border:1px solid #2d5e9c;background:linear-gradient(135deg,#d6d6d6,#fff 75%)"></div><svg class="a" style="left:63px;top:549px" width="12" height="12" viewBox="0 0 12 12"><path d="M3.5 5.4L5.2 8L8.7 3.3" fill="none" stroke="#38a834" stroke-width="1.8" stroke-linecap="round" stroke-linejoin="round"/></svg><div class="t ts" style="left:81px;top:549px">Equipment Setup</div><div class="a" style="left:62px;top:562px;width:14px;height:14px;background:#fff;border-radius:2px"></div><div class="a" style="left:63px;top:563px;width:12px;height:12px;border:1px solid #2d5e9c;background:linear-gradient(135deg,#d6d6d6,#fff 75%)"></div><svg class="a" style="left:63px;top:563px" width="12" height="12" viewBox="0 0 12 12"><path d="M3.5 5.4L5.2 8L8.7 3.3" fill="none" stroke="#38a834" stroke-width="1.8" stroke-linecap="round" stroke-linejoin="round"/></svg><div class="t ts" style="left:81px;top:563px">Equipment Delete</div><div class="a" style="left:7px;top:579px;width:9px;height:9px;border:1px solid #8e8f8f;border-radius:2px;background:linear-gradient(#fff,#e3e3e3)"></div><div class="a" style="left:9px;top:583px;width:5px;height:1px;background:#3f5ab5"></div><div class="a" style="left:25px;top:576px;width:12px;height:12px;background:#fff;border-radius:1px"></div><div class="a" style="left:26px;top:577px;width:10px;height:10px;background:#b1b1b1"></div><div class="t ts" style="left:43px;top:577px">Merge Tools</div><div class="a" style="left:43px;top:590px;width:14px;height:14px;background:#fff;border-radius:2px"></div><div class="a" style="left:44px;top:591px;width:12px;height:12px;border:1px solid #2d5e9c;background:linear-gradient(135deg,#d6d6d6,#fff 75%)"></div><svg class="a" style="left:44px;top:591px" width="12" height="12" viewBox="0 0 12 12"><path d="M3.5 5.4L5.2 8L8.7 3.3" fill="none" stroke="#38a834" stroke-width="1.8" stroke-linecap="round" stroke-linejoin="round"/></svg><div class="a" style="left:62px;top:591px;width:300px;height:3px;overflow:hidden"><div class="t ts" style="left:0;top:0">Insurance Carrier Combine</div></div><div class="a" style="left:43px;top:604px;width:14px;height:14px;background:#fff;border-radius:2px"></div><div class="a" style="left:44px;top:605px;width:12px;height:12px;border:1px solid #2d5e9c;background:linear-gradient(135deg,#d6d6d6,#fff 75%)"></div><svg class="a" style="left:44px;top:605px" width="12" height="12" viewBox="0 0 12 12"><path d="M3.5 5.4L5.2 8L8.7 3.3" fill="none" stroke="#38a834" stroke-width="1.8" stroke-linecap="round" stroke-linejoin="round"/></svg><div class="t ts" style="left:62px;top:605px">Patient Combine</div>
<svg class="a" style="left:0;top:0" width="351" height="613"><path fill="#6a6a6a" d="M11 3h1v1h-1zM11 5h1v1h-1zM11 7h1v1h-1zM11 9h1v1h-1zM11 11h1v1h-1zM11 13h1v1h-1zM11 15h1v1h-1zM11 17h1v1h-1zM11 19h1v1h-1zM11 21h1v1h-1zM11 23h1v1h-1zM11 25h1v1h-1zM11 27h1v1h-1zM11 29h1v1h-1zM11 31h1v1h-1zM11 33h1v1h-1zM11 35h1v1h-1zM11 37h1v1h-1zM11 39h1v1h-1zM11 41h1v1h-1zM11 43h1v1h-1zM11 45h1v1h-1zM11 47h1v1h-1zM11 49h1v1h-1zM11 51h1v1h-1zM11 53h1v1h-1zM11 55h1v1h-1zM11 57h1v1h-1zM11 59h1v1h-1zM11 61h1v1h-1zM11 63h1v1h-1zM11 65h1v1h-1zM11 67h1v1h-1zM11 69h1v1h-1zM11 71h1v1h-1zM11 73h1v1h-1zM11 75h1v1h-1zM11 77h1v1h-1zM11 79h1v1h-1zM11 81h1v1h-1zM11 83h1v1h-1zM11 85h1v1h-1zM11 87h1v1h-1zM11 89h1v1h-1zM11 91h1v1h-1zM11 93h1v1h-1zM11 95h1v1h-1zM11 97h1v1h-1zM11 99h1v1h-1zM11 101h1v1h-1zM11 103h1v1h-1zM11 105h1v1h-1zM11 107h1v1h-1zM11 109h1v1h-1zM11 111h1v1h-1zM11 113h1v1h-1zM11 115h1v1h-1zM11 117h1v1h-1zM11 119h1v1h-1zM11 121h1v1h-1zM11 123h1v1h-1zM11 125h1v1h-1zM11 127h1v1h-1zM11 129h1v1h-1zM11 131h1v1h-1zM11 133h1v1h-1zM11 135h1v1h-1zM11 137h1v1h-1zM11 139h1v1h-1zM11 141h1v1h-1zM11 143h1v1h-1zM11 145h1v1h-1zM11 147h1v1h-1zM11 149h1v1h-1zM11 151h1v1h-1zM11 153h1v1h-1zM11 155h1v1h-1zM11 157h1v1h-1zM11 159h1v1h-1zM11 161h1v1h-1zM11 163h1v1h-1zM11 165h1v1h-1zM11 167h1v1h-1zM11 169h1v1h-1zM11 171h1v1h-1zM11 173h1v1h-1zM11 175h1v1h-1zM11 177h1v1h-1zM11 179h1v1h-1zM11 181h1v1h-1zM11 183h1v1h-1zM11 185h1v1h-1zM11 187h1v1h-1zM11 189h1v1h-1zM11 191h1v1h-1zM11 193h1v1h-1zM11 195h1v1h-1zM11 197h1v1h-1zM11 199h1v1h-1zM11 201h1v1h-1zM11 203h1v1h-1zM11 205h1v1h-1zM11 207h1v1h-1zM11 209h1v1h-1zM11 211h1v1h-1zM11 213h1v1h-1zM11 215h1v1h-1zM11 217h1v1h-1zM11 219h1v1h-1zM11 221h1v1h-1zM11 223h1v1h-1zM11 225h1v1h-1zM11 227h1v1h-1zM11 229h1v1h-1zM11 231h1v1h-1zM11 233h1v1h-1zM11 235h1v1h-1zM11 237h1v1h-1zM11 239h1v1h-1zM11 241h1v1h-1zM11 243h1v1h-1zM11 245h1v1h-1zM11 247h1v1h-1zM11 249h1v1h-1zM11 251h1v1h-1zM11 253h1v1h-1zM11 255h1v1h-1zM11 257h1v1h-1zM11 259h1v1h-1zM11 261h1v1h-1zM11 263h1v1h-1zM11 265h1v1h-1zM11 267h1v1h-1zM11 269h1v1h-1zM11 271h1v1h-1zM11 273h1v1h-1zM11 275h1v1h-1zM11 277h1v1h-1zM11 279h1v1h-1zM11 281h1v1h-1zM11 283h1v1h-1zM11 285h1v1h-1zM11 287h1v1h-1zM11 289h1v1h-1zM11 291h1v1h-1zM11 293h1v1h-1zM11 295h1v1h-1zM11 297h1v1h-1zM11 299h1v1h-1zM11 301h1v1h-1zM11 303h1v1h-1zM11 305h1v1h-1zM11 307h1v1h-1zM11 309h1v1h-1zM11 311h1v1h-1zM11 323h1v1h-1zM11 325h1v1h-1zM11 327h1v1h-1zM11 329h1v1h-1zM11 331h1v1h-1zM11 333h1v1h-1zM11 335h1v1h-1zM11 337h1v1h-1zM11 339h1v1h-1zM11 341h1v1h-1zM11 343h1v1h-1zM11 345h1v1h-1zM11 347h1v1h-1zM11 349h1v1h-1zM11 351h1v1h-1zM11 353h1v1h-1zM11 355h1v1h-1zM11 357h1v1h-1zM11 359h1v1h-1zM11 361h1v1h-1zM11 363h1v1h-1zM11 365h1v1h-1zM11 367h1v1h-1zM11 369h1v1h-1zM11 371h1v1h-1zM11 373h1v1h-1zM11 375h1v1h-1zM11 377h1v1h-1zM11 379h1v1h-1zM11 381h1v1h-1zM11 393h1v1h-1zM11 395h1v1h-1zM11 397h1v1h-1zM11 399h1v1h-1zM11 401h1v1h-1zM11 403h1v1h-1zM11 405h1v1h-1zM11 407h1v1h-1zM11 409h1v1h-1zM11 411h1v1h-1zM11 413h1v1h-1zM11 415h1v1h-1zM11 417h1v1h-1zM11 419h1v1h-1zM11 421h1v1h-1zM11 423h1v1h-1zM11 425h1v1h-1zM11 427h1v1h-1zM11 429h1v1h-1zM11 431h1v1h-1zM11 433h1v1h-1zM11 435h1v1h-1zM11 437h1v1h-1zM11 439h1v1h-1zM11 441h1v1h-1zM11 443h1v1h-1zM11 445h1v1h-1zM11 447h1v1h-1zM11 449h1v1h-1zM11 451h1v1h-1zM11 453h1v1h-1zM11 455h1v1h-1zM11 457h1v1h-1zM11 459h1v1h-1zM11 461h1v1h-1zM11 463h1v1h-1zM11 465h1v1h-1zM11 467h1v1h-1zM11 469h1v1h-1zM11 471h1v1h-1zM11 473h1v1h-1zM11 475h1v1h-1zM11 477h1v1h-1zM11 479h1v1h-1zM11 481h1v1h-1zM11 483h1v1h-1zM11 485h1v1h-1zM11 487h1v1h-1zM11 489h1v1h-1zM11 491h1v1h-1zM11 493h1v1h-1zM11 495h1v1h-1zM11 497h1v1h-1zM11 499h1v1h-1zM11 501h1v1h-1zM11 503h1v1h-1zM11 505h1v1h-1zM11 507h1v1h-1zM11 509h1v1h-1zM11 511h1v1h-1zM11 513h1v1h-1zM11 515h1v1h-1zM11 517h1v1h-1zM11 519h1v1h-1zM11 521h1v1h-1zM11 523h1v1h-1zM11 525h1v1h-1zM11 527h1v1h-1zM11 529h1v1h-1zM11 531h1v1h-1zM11 533h1v1h-1zM11 535h1v1h-1zM11 537h1v1h-1zM11 539h1v1h-1zM11 541h1v1h-1zM11 543h1v1h-1zM11 545h1v1h-1zM11 547h1v1h-1zM11 549h1v1h-1zM11 551h1v1h-1zM11 553h1v1h-1zM11 555h1v1h-1zM11 557h1v1h-1zM11 559h1v1h-1zM11 561h1v1h-1zM11 563h1v1h-1zM11 565h1v1h-1zM11 567h1v1h-1zM11 569h1v1h-1zM11 571h1v1h-1zM11 573h1v1h-1zM11 575h1v1h-1zM11 577h1v1h-1zM11 589h1v1h-1zM11 591h1v1h-1zM11 593h1v1h-1zM11 595h1v1h-1zM11 597h1v1h-1zM11 599h1v1h-1zM11 601h1v1h-1zM11 603h1v1h-1zM11 605h1v1h-1zM11 607h1v1h-1zM11 609h1v1h-1zM11 611h1v1h-1zM11 613h1v1h-1zM11 615h1v1h-1zM11 617h1v1h-1zM30 3h1v1h-1zM30 5h1v1h-1zM30 7h1v1h-1zM30 9h1v1h-1zM30 11h1v1h-1zM30 13h1v1h-1zM30 15h1v1h-1zM30 17h1v1h-1zM30 19h1v1h-1zM30 21h1v1h-1zM30 23h1v1h-1zM30 25h1v1h-1zM30 27h1v1h-1zM30 29h1v1h-1zM30 31h1v1h-1zM30 33h1v1h-1zM30 35h1v1h-1zM30 37h1v1h-1zM30 39h1v1h-1zM30 41h1v1h-1zM30 43h1v1h-1zM30 45h1v1h-1zM30 57h1v1h-1zM30 59h1v1h-1zM30 61h1v1h-1zM30 63h1v1h-1zM30 65h1v1h-1zM30 67h1v1h-1zM30 69h1v1h-1zM30 71h1v1h-1zM30 73h1v1h-1zM30 75h1v1h-1zM30 77h1v1h-1zM30 79h1v1h-1zM30 81h1v1h-1zM30 83h1v1h-1zM30 85h1v1h-1zM30 87h1v1h-1zM30 89h1v1h-1zM30 91h1v1h-1zM30 93h1v1h-1zM30 95h1v1h-1zM30 97h1v1h-1zM30 99h1v1h-1zM30 101h1v1h-1zM30 103h1v1h-1zM30 105h1v1h-1zM30 107h1v1h-1zM30 109h1v1h-1zM30 111h1v1h-1zM30 113h1v1h-1zM30 115h1v1h-1zM30 117h1v1h-1zM30 119h1v1h-1zM30 121h1v1h-1zM30 123h1v1h-1zM30 125h1v1h-1zM30 127h1v1h-1zM30 129h1v1h-1zM30 131h1v1h-1zM30 133h1v1h-1zM30 135h1v1h-1zM30 137h1v1h-1zM30 139h1v1h-1zM30 141h1v1h-1zM30 143h1v1h-1zM30 155h1v1h-1zM30 157h1v1h-1zM30 159h1v1h-1zM30 161h1v1h-1zM30 163h1v1h-1zM30 165h1v1h-1zM30 167h1v1h-1zM30 169h1v1h-1zM30 171h1v1h-1zM30 173h1v1h-1zM30 175h1v1h-1zM30 177h1v1h-1zM30 179h1v1h-1zM30 181h1v1h-1zM30 183h1v1h-1zM30 185h1v1h-1zM30 187h1v1h-1zM30 189h1v1h-1zM30 191h1v1h-1zM30 193h1v1h-1zM30 195h1v1h-1zM30 197h1v1h-1zM30 199h1v1h-1zM30 201h1v1h-1zM30 203h1v1h-1zM30 205h1v1h-1zM30 207h1v1h-1zM30 209h1v1h-1zM30 211h1v1h-1zM30 213h1v1h-1zM30 215h1v1h-1zM30 217h1v1h-1zM30 219h1v1h-1zM30 221h1v1h-1zM30 223h1v1h-1zM30 225h1v1h-1zM30 227h1v1h-1zM30 239h1v1h-1zM30 241h1v1h-1zM30 243h1v1h-1zM30 245h1v1h-1zM30 247h1v1h-1zM30 249h1v1h-1zM30 251h1v1h-1zM30 253h1v1h-1zM30 255h1v1h-1zM30 257h1v1h-1zM30 259h1v1h-1zM30 261h1v1h-1zM30 263h1v1h-1zM30 265h1v1h-1zM30 267h1v1h-1zM30 269h1v1h-1zM30 271h1v1h-1zM30 273h1v1h-1zM30 275h1v1h-1zM30 277h1v1h-1zM30 279h1v1h-1zM30 281h1v1h-1zM30 283h1v1h-1zM30 285h1v1h-1zM30 287h1v1h-1zM30 289h1v1h-1zM30 291h1v1h-1zM30 293h1v1h-1zM30 295h1v1h-1zM30 297h1v1h-1zM30 299h1v1h-1zM30 301h1v1h-1zM30 303h1v1h-1zM30 325h1v1h-1zM30 327h1v1h-1zM30 329h1v1h-1zM30 331h1v1h-1zM30 333h1v1h-1zM30 335h1v1h-1zM30 337h1v1h-1zM30 339h1v1h-1zM30 341h1v1h-1zM30 343h1v1h-1zM30 345h1v1h-1zM30 347h1v1h-1zM30 349h1v1h-1zM30 351h1v1h-1zM30 353h1v1h-1zM30 355h1v1h-1zM30 357h1v1h-1zM30 359h1v1h-1zM30 361h1v1h-1zM30 363h1v1h-1zM30 365h1v1h-1zM30 367h1v1h-1zM30 369h1v1h-1zM30 371h1v1h-1zM30 373h1v1h-1zM30 395h1v1h-1zM30 407h1v1h-1zM30 409h1v1h-1zM30 411h1v1h-1zM30 413h1v1h-1zM30 415h1v1h-1zM30 417h1v1h-1zM30 419h1v1h-1zM30 421h1v1h-1zM30 423h1v1h-1zM30 425h1v1h-1zM30 427h1v1h-1zM30 429h1v1h-1zM30 431h1v1h-1zM30 433h1v1h-1zM30 435h1v1h-1zM30 437h1v1h-1zM30 439h1v1h-1zM30 441h1v1h-1zM30 443h1v1h-1zM30 445h1v1h-1zM30 447h1v1h-1zM30 449h1v1h-1zM30 451h1v1h-1zM30 453h1v1h-1zM30 455h1v1h-1zM30 457h1v1h-1zM30 459h1v1h-1zM30 461h1v1h-1zM30 463h1v1h-1zM30 465h1v1h-1zM30 467h1v1h-1zM30 469h1v1h-1zM30 471h1v1h-1zM30 473h1v1h-1zM30 475h1v1h-1zM30 477h1v1h-1zM30 479h1v1h-1zM30 491h1v1h-1zM30 493h1v1h-1zM30 495h1v1h-1zM30 497h1v1h-1zM30 499h1v1h-1zM30 501h1v1h-1zM30 503h1v1h-1zM30 505h1v1h-1zM30 507h1v1h-1zM30 509h1v1h-1zM30 511h1v1h-1zM30 513h1v1h-1zM30 515h1v1h-1zM30 517h1v1h-1zM30 519h1v1h-1zM30 521h1v1h-1zM30 523h1v1h-1zM30 525h1v1h-1zM30 527h1v1h-1zM30 529h1v1h-1zM30 531h1v1h-1zM30 533h1v1h-1zM30 535h1v1h-1zM30 591h1v1h-1zM30 593h1v1h-1zM30 595h1v1h-1zM30 597h1v1h-1zM30 599h1v1h-1zM30 601h1v1h-1zM30 603h1v1h-1zM30 605h1v1h-1zM30 607h1v1h-1zM30 609h1v1h-1zM30 611h1v1h-1zM30 613h1v1h-1zM30 615h1v1h-1zM30 617h1v1h-1zM49 3h1v1h-1zM49 5h1v1h-1zM49 7h1v1h-1zM49 9h1v1h-1zM49 11h1v1h-1zM49 13h1v1h-1zM49 15h1v1h-1zM49 17h1v1h-1zM49 19h1v1h-1zM49 21h1v1h-1zM49 23h1v1h-1zM49 25h1v1h-1zM49 27h1v1h-1zM49 29h1v1h-1zM49 31h1v1h-1zM49 33h1v1h-1zM49 35h1v1h-1zM49 37h1v1h-1zM49 59h1v1h-1zM49 61h1v1h-1zM49 63h1v1h-1zM49 65h1v1h-1zM49 67h1v1h-1zM49 69h1v1h-1zM49 71h1v1h-1zM49 73h1v1h-1zM49 75h1v1h-1zM49 77h1v1h-1zM49 79h1v1h-1zM49 81h1v1h-1zM49 83h1v1h-1zM49 85h1v1h-1zM49 87h1v1h-1zM49 89h1v1h-1zM49 91h1v1h-1zM49 93h1v1h-1zM49 95h1v1h-1zM49 97h1v1h-1zM49 99h1v1h-1zM49 101h1v1h-1zM49 103h1v1h-1zM49 105h1v1h-1zM49 107h1v1h-1zM49 109h1v1h-1zM49 111h1v1h-1zM49 113h1v1h-1zM49 115h1v1h-1zM49 117h1v1h-1zM49 119h1v1h-1zM49 121h1v1h-1zM49 123h1v1h-1zM49 125h1v1h-1zM49 127h1v1h-1zM49 129h1v1h-1zM49 131h1v1h-1zM49 133h1v1h-1zM49 135h1v1h-1zM49 157h1v1h-1zM49 159h1v1h-1zM49 161h1v1h-1zM49 163h1v1h-1zM49 165h1v1h-1zM49 167h1v1h-1zM49 169h1v1h-1zM49 171h1v1h-1zM49 173h1v1h-1zM49 175h1v1h-1zM49 177h1v1h-1zM49 241h1v1h-1zM49 243h1v1h-1zM49 245h1v1h-1zM49 247h1v1h-1zM49 249h1v1h-1zM49 251h1v1h-1zM49 253h1v1h-1zM49 255h1v1h-1zM49 257h1v1h-1zM49 259h1v1h-1zM49 261h1v1h-1zM49 409h1v1h-1zM49 411h1v1h-1zM49 413h1v1h-1zM49 415h1v1h-1zM49 417h1v1h-1zM49 419h1v1h-1zM49 421h1v1h-1zM49 423h1v1h-1zM49 425h1v1h-1zM49 427h1v1h-1zM49 429h1v1h-1zM49 493h1v1h-1zM49 495h1v1h-1zM49 497h1v1h-1zM49 499h1v1h-1zM49 501h1v1h-1zM49 503h1v1h-1zM49 505h1v1h-1zM49 507h1v1h-1zM49 509h1v1h-1zM49 511h1v1h-1zM49 513h1v1h-1zM49 515h1v1h-1zM49 517h1v1h-1zM49 519h1v1h-1zM49 521h1v1h-1zM49 523h1v1h-1zM49 525h1v1h-1zM49 527h1v1h-1zM49 549h1v1h-1zM49 551h1v1h-1zM49 553h1v1h-1zM49 555h1v1h-1zM49 557h1v1h-1zM49 559h1v1h-1zM49 561h1v1h-1zM49 563h1v1h-1zM49 565h1v1h-1zM49 567h1v1h-1zM49 569h1v1h-1zM49 57h1v1h-1zM49 155h1v1h-1zM49 239h1v1h-1zM30 323h1v1h-1zM30 393h1v1h-1zM49 407h1v1h-1zM49 491h1v1h-1zM49 547h1v1h-1zM30 589h1v1h-1zM51 9h1v1h-1zM53 9h1v1h-1zM55 9h1v1h-1zM57 9h1v1h-1zM59 9h1v1h-1zM51 23h1v1h-1zM53 23h1v1h-1zM55 23h1v1h-1zM57 23h1v1h-1zM59 23h1v1h-1zM51 37h1v1h-1zM53 37h1v1h-1zM55 37h1v1h-1zM57 37h1v1h-1zM59 37h1v1h-1zM36 51h1v1h-1zM38 51h1v1h-1zM40 51h1v1h-1zM51 65h1v1h-1zM53 65h1v1h-1zM55 65h1v1h-1zM57 65h1v1h-1zM59 65h1v1h-1zM51 79h1v1h-1zM53 79h1v1h-1zM55 79h1v1h-1zM57 79h1v1h-1zM59 79h1v1h-1zM51 93h1v1h-1zM53 93h1v1h-1zM55 93h1v1h-1zM57 93h1v1h-1zM59 93h1v1h-1zM51 107h1v1h-1zM53 107h1v1h-1zM55 107h1v1h-1zM57 107h1v1h-1zM59 107h1v1h-1zM51 121h1v1h-1zM53 121h1v1h-1zM55 121h1v1h-1zM57 121h1v1h-1zM59 121h1v1h-1zM51 135h1v1h-1zM53 135h1v1h-1zM55 135h1v1h-1zM57 135h1v1h-1zM59 135h1v1h-1zM36 149h1v1h-1zM38 149h1v1h-1zM40 149h1v1h-1zM51 163h1v1h-1zM53 163h1v1h-1zM55 163h1v1h-1zM57 163h1v1h-1zM59 163h1v1h-1zM51 177h1v1h-1zM53 177h1v1h-1zM55 177h1v1h-1zM57 177h1v1h-1zM59 177h1v1h-1zM32 191h1v1h-1zM34 191h1v1h-1zM36 191h1v1h-1zM38 191h1v1h-1zM40 191h1v1h-1zM32 205h1v1h-1zM34 205h1v1h-1zM36 205h1v1h-1zM38 205h1v1h-1zM40 205h1v1h-1zM32 219h1v1h-1zM34 219h1v1h-1zM36 219h1v1h-1zM38 219h1v1h-1zM40 219h1v1h-1zM36 233h1v1h-1zM38 233h1v1h-1zM40 233h1v1h-1zM51 247h1v1h-1zM53 247h1v1h-1zM55 247h1v1h-1zM57 247h1v1h-1zM59 247h1v1h-1zM51 261h1v1h-1zM53 261h1v1h-1zM55 261h1v1h-1zM57 261h1v1h-1zM59 261h1v1h-1zM32 275h1v1h-1zM34 275h1v1h-1zM36 275h1v1h-1zM38 275h1v1h-1zM40 275h1v1h-1zM32 289h1v1h-1zM34 289h1v1h-1zM36 289h1v1h-1zM38 289h1v1h-1zM40 289h1v1h-1zM32 303h1v1h-1zM34 303h1v1h-1zM36 303h1v1h-1zM38 303h1v1h-1zM40 303h1v1h-1zM17 317h1v1h-1zM19 317h1v1h-1zM21 317h1v1h-1zM32 331h1v1h-1zM34 331h1v1h-1zM36 331h1v1h-1zM38 331h1v1h-1zM40 331h1v1h-1zM32 345h1v1h-1zM34 345h1v1h-1zM36 345h1v1h-1zM38 345h1v1h-1zM40 345h1v1h-1zM32 359h1v1h-1zM34 359h1v1h-1zM36 359h1v1h-1zM38 359h1v1h-1zM40 359h1v1h-1zM32 373h1v1h-1zM34 373h1v1h-1zM36 373h1v1h-1zM38 373h1v1h-1zM40 373h1v1h-1zM17 387h1v1h-1zM19 387h1v1h-1zM21 387h1v1h-1zM36 401h1v1h-1zM38 401h1v1h-1zM40 401h1v1h-1zM51 415h1v1h-1zM53 415h1v1h-1zM55 415h1v1h-1zM57 415h1v1h-1zM59 415h1v1h-1zM51 429h1v1h-1zM53 429h1v1h-1zM55 429h1v1h-1zM57 429h1v1h-1zM59 429h1v1h-1zM32 443h1v1h-1zM34 443h1v1h-1zM36 443h1v1h-1zM38 443h1v1h-1zM40 443h1v1h-1zM32 457h1v1h-1zM34 457h1v1h-1zM36 457h1v1h-1zM38 457h1v1h-1zM40 457h1v1h-1zM32 471h1v1h-1zM34 471h1v1h-1zM36 471h1v1h-1zM38 471h1v1h-1zM40 471h1v1h-1zM36 485h1v1h-1zM38 485h1v1h-1zM40 485h1v1h-1zM51 499h1v1h-1zM53 499h1v1h-1zM55 499h1v1h-1zM57 499h1v1h-1zM59 499h1v1h-1zM51 513h1v1h-1zM53 513h1v1h-1zM55 513h1v1h-1zM57 513h1v1h-1zM59 513h1v1h-1zM51 527h1v1h-1zM53 527h1v1h-1zM55 527h1v1h-1zM57 527h1v1h-1zM59 527h1v1h-1zM36 541h1v1h-1zM38 541h1v1h-1zM40 541h1v1h-1zM51 555h1v1h-1zM53 555h1v1h-1zM55 555h1v1h-1zM57 555h1v1h-1zM59 555h1v1h-1zM51 569h1v1h-1zM53 569h1v1h-1zM55 569h1v1h-1zM57 569h1v1h-1zM59 569h1v1h-1zM17 583h1v1h-1zM19 583h1v1h-1zM21 583h1v1h-1zM32 597h1v1h-1zM34 597h1v1h-1zM36 597h1v1h-1zM38 597h1v1h-1zM40 597h1v1h-1zM32 611h1v1h-1zM34 611h1v1h-1zM36 611h1v1h-1zM38 611h1v1h-1zM40 611h1v1h-1z"/></svg>
<div class="a" style="left:333px;top:0px;width:18px;height:613px;background:#f0f0f0"></div>
<div class="a" style="left:333px;top:0px;width:1px;height:595px;background:#fff"></div>
<div class="a" style="left:334px;top:446px;width:15px;height:118px;background:#cdcdcd"></div>
<div class="a" style="left:0px;top:595px;width:351px;height:18px;background:#f0f0f0"></div>
<div class="a" style="left:0px;top:595px;width:334px;height:1px;background:#fff"></div>
<div class="a" style="left:18px;top:596px;width:291px;height:15px;background:#cdcdcd"></div>
</div>
<svg class="a" style="left:956px;top:105px" width="7" height="7" viewBox="0 0 7 7"><polygon points="0,3.5 3.5,0 7,3.5 7,6.5 3.5,3 0,6.5" fill="#606060"/></svg>
<svg class="a" style="left:956px;top:682px" width="7" height="7" viewBox="0 0 7 7"><polygon points="0,0 3.5,3.5 7,0 7,3 3.5,6.5 0,3" fill="#606060"/></svg>
<svg class="a" style="left:624px;top:698px" width="7" height="7" viewBox="0 0 7 7"><polygon points="3.5,0 0,3.5 3.5,7 6.5,7 3,3.5 6.5,0" fill="#606060"/></svg>
<svg class="a" style="left:940px;top:698px" width="7" height="7" viewBox="0 0 7 7"><polygon points="0,0 3.5,3.5 0,7 3,7 6.5,3.5 3,0" fill="#606060"/></svg>
<svg class="a" style="left:453px;top:229px" width="7" height="7" viewBox="0 0 7 7"><polygon points="0,3.5 3.5,0 7,3.5 7,6.5 3.5,3 0,6.5" fill="#606060"/></svg>
<svg class="a" style="left:453px;top:661px" width="7" height="7" viewBox="0 0 7 7"><polygon points="0,0 3.5,3.5 7,0 7,3 3.5,6.5 0,3" fill="#606060"/></svg>
<svg class="a" style="left:18px;top:677px" width="7" height="7" viewBox="0 0 7 7"><polygon points="3.5,0 0,3.5 3.5,7 6.5,7 3,3.5 6.5,0" fill="#c4c4c4"/></svg>
<svg class="a" style="left:437px;top:677px" width="7" height="7" viewBox="0 0 7 7"><polygon points="0,0 3.5,3.5 0,7 3,7 6.5,3.5 3,0" fill="#c4c4c4"/></svg>
</body></html>
